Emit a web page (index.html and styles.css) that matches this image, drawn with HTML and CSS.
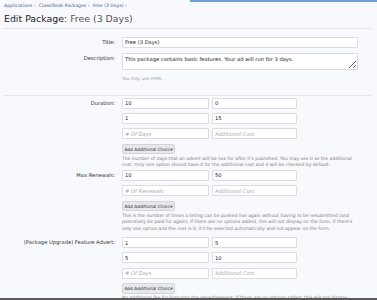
FILE: index.html
```html
<!DOCTYPE html>
<html>
<head>
<meta charset="utf-8">
<link rel="stylesheet" href="styles.css">
</head>
<body>
<div class="topline"></div>
<div class="crumbs"><span>Applications ›</span><span>Classifieds Packages ›</span><span>Free (3 Days) ›</span></div>
<h1 class="title">Edit Package: <span class="muted">Free (3 Days)</span></h1>
<div class="rule"></div>
<div class="form">
  <div class="row first">
    <div class="label">Title:</div>
    <div class="ctl"><input class="text full" value="Free (3 Days)"></div>
  </div>
  <div class="row gap5">
    <div class="label">Description:</div>
    <div class="ctl"><textarea class="text full area">This package contains basic features. Your ad will run for 3 days.</textarea>
      <div class="note">You may use HTML.</div></div>
  </div>
</div>
<div class="rule rule2"></div>
<div class="form">
  <div class="row sec1">
    <div class="label">Duration:</div>
    <div class="ctl">
      <div class="pair"><input class="text a" value="10"><input class="text b" value="0"></div>
      <div class="pair"><input class="text a" value="1"><input class="text b" value="15"></div>
      <div class="pair"><input class="text a" placeholder="# Of Days"><input class="text b" placeholder="Additional Cost"></div>
      <div class="btn">Add Additional Choice</div>
      <div class="help">The number of days that an advert will be live for after it's published. You may use 0 as the additional cost. Only one option should have 0 for the additional cost and it will be checked by default.</div>
    </div>
  </div>
  <div class="row sec2">
    <div class="label">Max Renewals:</div>
    <div class="ctl">
      <div class="pair"><input class="text a" value="10"><input class="text b" value="50"></div>
      <div class="pair"><input class="text a" placeholder="# Of Renewals"><input class="text b" placeholder="Additional Cost"></div>
      <div class="btn">Add Additional Choice</div>
      <div class="help">This is the number of times a listing can be pushed live again without having to be resubmitted (and potentially be paid for again). If there are no options added, this will not display on the form. If there's only one option and the cost is 0, it'll be selected automatically and not appear on the form.</div>
    </div>
  </div>
  <div class="row sec3">
    <div class="label">(Package Upgrade) Feature Advert:</div>
    <div class="ctl">
      <div class="pair"><input class="text a" value="1"><input class="text b" value="5"></div>
      <div class="pair"><input class="text a" value="5"><input class="text b" value="10"></div>
      <div class="pair"><input class="text a" placeholder="# Of Days"><input class="text b" placeholder="Additional Cost"></div>
      <div class="btn">Add Additional Choice</div>
      <div class="help">An additional fee for featuring the advertisement. If there are no options added, this will not display.</div>
    </div>
  </div>
</div>
<div class="bottombar"></div>
</body>
</html>
```

FILE: styles.css
```css
html, body {
  margin: 0;
  padding: 0;
  background: #f8f9fc;
  font-family: "DejaVu Sans", Verdana, sans-serif;
  color: #333;
  overflow: hidden;
  height: 300px;
}
.topline {
  height: 1.5px;
  margin-left: 190px;
  background: #6e9fd8;
}
.crumbs {
  height: 7px;
  line-height: 7px;
  padding-left: 4px;
  font-size: 4.6px;
  color: #3b5f8c;
  display: flex;
  gap: 3.5px;
}
.title {
  margin: 4px 0 0 4px;
  padding: 0 0 3px;
  font-size: 9.4px;
  line-height: 12px;
  font-weight: normal;
  color: #222;
}
.title .muted {
  color: #555;
}
.rule {
  height: 1px;
  background: #e6e8ee;
  margin: 0 5px 0 3px;
}
.rule2 {
  margin-top: 13px;
}
.form {
  display: flex;
  flex-direction: column;
}
.row {
  display: grid;
  grid-template-columns: 115px 236px;
  column-gap: 7px;
}
.row.first { margin-top: 8px; }
.row.gap5 { margin-top: 5px; }
.row.sec1 { margin-top: 2px; }
.row.sec2 { margin-top: 1px; }
.row.sec3 { margin-top: 5px; }
.label {
  text-align: right;
  font-size: 5.2px;
  line-height: 11px;
  color: #333;
}
.ctl {
  display: flex;
  flex-direction: column;
}
.text {
  box-sizing: border-box;
  height: 11px;
  margin: 0;
  padding: 0 2px;
  border: 1px solid #dcdde3;
  border-radius: 1px;
  background: #fff;
  font-family: "DejaVu Sans", Verdana, sans-serif;
  font-size: 5.2px;
  color: #222;
  outline: none;
}
.text::placeholder {
  color: #aaa;
  font-style: italic;
}
.full { width: 236px; }
.area {
  height: 17px;
  padding-top: 2px;
  resize: vertical;
  display: block;
  overflow: hidden;
}
.note {
  margin-top: 5px;
  font-size: 4.3px;
  line-height: 7px;
  color: #999;
}
.pair {
  display: flex;
  gap: 3px;
  margin-bottom: 4.3px;
}
.pair .a { width: 87px; }
.pair .b { width: 85px; }
.btn {
  box-sizing: border-box;
  width: 53px;
  height: 10.5px;
  line-height: 9px;
  margin-top: 0.5px;
  border: 1px solid #d3d4da;
  border-radius: 2px;
  background: #e7e8ee;
  font-size: 4.4px;
  color: #333;
  text-align: center;
}
.help {
  margin-top: 1.5px;
  font-size: 4.5px;
  line-height: 6.4px;
  color: #808080;
}
.bottombar {
  position: fixed;
  left: 0;
  right: 0;
  bottom: 0;
  height: 2px;
  background: #5a5a5c;
}
```
